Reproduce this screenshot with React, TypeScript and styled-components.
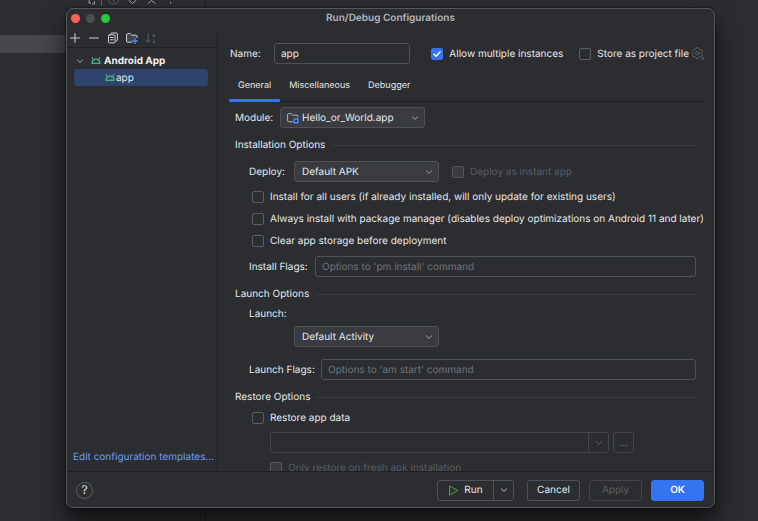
import React from "react";
import styled, { createGlobalStyle, css } from "styled-components";

const color = {
  panel: "#2b2d30",
  line: "#1f2023",
  rule: "#393b40",
  border: "#4e5157",
  text: "#e6e8eb",
  muted: "#6f737a",
  disabled: "#5a5d63",
  field: "#393b40",
  blue: "#3574f0",
  selection: "#2e436e",
  link: "#6b9bfa",
  icon: "#ced0d6",
};

const GlobalStyle = createGlobalStyle`
  * { box-sizing: border-box; }
  html, body { margin: 0; height: 100%; background: ${color.panel}; }
  body, button, input, select {
    font-family: Inter, "Liberation Sans", sans-serif;
    font-size: 10px;
    line-height: 14px;
    color: ${color.text};
    text-rendering: geometricPrecision;
  }
  button { padding: 0; border: 0; background: none; }
`;

/* ---------- editor behind the dialog ---------- */

const Desktop = styled.div`
  position: relative;
  display: flex;
  height: 100vh;
  min-height: 480px;
  overflow: hidden;
  padding: 8px 43px 13px 66px;
`;

const Backdrop = styled.div`
  position: absolute;
  inset: 0;
`;

const ToolPane = styled.div`
  width: 206px;
  height: 100%;
  padding-top: 35px;
  border-right: 1px solid ${color.line};
`;

const ActiveLine = styled.div`
  height: 18px;
  background: #45474b;
`;

const BackdropIcons = styled.svg`
  position: absolute;
  top: 0;
  left: 84px;
`;

/* ---------- dialog frame ---------- */

const Dialog = styled.section`
  position: relative;
  flex: 1;
  display: flex;
  flex-direction: column;
  min-width: 0;
  overflow: hidden;
  background: ${color.panel};
  border: 1px solid #55575b;
  border-radius: 7px;
`;

const DialogShadow = styled.div`
  flex: 1;
  display: flex;
  min-width: 0;
  position: relative;
  border-radius: 7px;
  box-shadow: 0 14px 26px rgba(0, 0, 0, 0.7), 0 0 2px #000;
`;

const TitleBar = styled.header`
  display: grid;
  grid-template-columns: 1fr auto 1fr;
  align-items: center;
  height: 20px;
  flex: none;
  padding: 0 4px 2px;
`;

const Title = styled.h1`
  margin: 0;
  font-size: 10px;
  line-height: 14px;
  font-weight: 600;
  color: #b4b7bd;
`;

const Lights = styled.div`
  display: flex;
  gap: 6px;
`;

const Light = styled.button<{ $fill: string }>`
  width: 9px;
  height: 9px;
  border-radius: 50%;
  background: ${(p) => p.$fill};
`;

const Body = styled.div`
  flex: 1;
  display: flex;
  min-height: 0;
`;

/* ---------- sidebar ---------- */

const Sidebar = styled.aside`
  display: flex;
  flex-direction: column;
  flex: none;
  width: 151px;
  border-right: 1px solid ${color.line};
`;

const Toolbar = styled.div`
  display: flex;
  align-items: center;
  gap: 7px;
  height: 19px;
  padding-left: 2px;
  border-bottom: 1px solid ${color.line};
`;

const ToolButton = styled.button`
  display: grid;
  place-items: center;
  width: 12px;
  height: 12px;
  color: ${color.icon};
  &:disabled { color: #5a5d63; }
  svg { display: block; }
`;

const Tree = styled.ul`
  flex: 1;
  margin: 0;
  padding: 4px 9px 0 7px;
  list-style: none;
`;

const TreeItem = styled.li<{ $selected?: boolean; $depth?: number }>`
  display: flex;
  align-items: center;
  height: 17px;
  border-radius: 3px;
  padding-left: ${(p) => (p.$depth ? 31 : 2)}px;
  gap: ${(p) => (p.$depth ? 1 : 3)}px;
  font-weight: ${(p) => (p.$depth ? 400 : 700)};
  color: ${(p) => (p.$depth ? color.text : "#f0f1f2")};
  background: ${(p) => (p.$selected ? color.selection : "transparent")};
`;

const Twisty = styled.span`
  display: flex;
  width: 12px;
  color: #9da0a8;
`;

const TemplatesLink = styled.a`
  padding: 0 6px 7px;
  color: ${color.link};
  text-decoration: none;
  white-space: nowrap;
`;

/* ---------- form ---------- */

const Main = styled.main`
  flex: 1;
  display: flex;
  flex-direction: column;
  min-width: 0;
  padding: 14px 10px 0 11px;
`;

const NameRow = styled.div`
  display: flex;
  align-items: center;
  flex: none;
  height: 21px;
  padding-left: 1px;
`;

const NameLabel = styled.label`
  width: 44px;
`;

const TextField = styled.input`
  flex: 1;
  min-width: 0;
  height: 21px;
  padding: 0 6px;
  background: transparent;
  border: 1px solid ${color.border};
  border-radius: 3px;
  outline: none;
  &::placeholder { color: ${color.muted}; opacity: 1; }
`;

const CheckLabel = styled.label<{ $spaceBefore?: number; $disabled?: boolean }>`
  display: flex;
  align-items: center;
  gap: 6px;
  margin-left: ${(p) => p.$spaceBefore ?? 0}px;
  white-space: nowrap;
  color: ${(p) => (p.$disabled ? color.disabled : color.text)};
`;

const CheckCell = styled.span`
  display: grid;
  place-items: center;
  width: 12px;
  height: 12px;
  > * { grid-area: 1 / 1; }
  svg { pointer-events: none; }
`;

const CheckInput = styled.input`
  appearance: none;
  width: 12px;
  height: 12px;
  margin: 0;
  border: 1px solid #5a5d63;
  border-radius: 2px;
  &:checked { background: ${color.blue}; border-color: ${color.blue}; }
  &:disabled { background: ${color.field}; border-color: #55585e; }
`;

const GearButton = styled.button`
  margin-left: 3px;
  width: 12px;
  height: 13px;
  color: #5f6268;
  svg { display: block; }
`;

const Tabs = styled.nav`
  display: flex;
  flex: none;
  height: 32px;
  margin-top: 6px;
  border-bottom: 1px solid ${color.line};
`;

const Tab = styled.button<{ $active?: boolean }>`
  position: relative;
  height: 32px;
  padding: 0 9px;
  font-size: 9px;
  ${(p) =>
    p.$active &&
    css`
      &::after {
        content: "";
        position: absolute;
        inset: auto 0 0;
        height: 3px;
        background: ${color.blue};
        border-radius: 1px;
      }
    `}
`;

const Form = styled.div`
  flex: 1;
  min-height: 0;
  overflow: hidden;
  padding: 5px 8px 0 6px;
`;

const SectionTitle = styled.h2`
  display: flex;
  align-items: center;
  gap: 6px;
  margin: 10px 0 0;
  font-size: 10px;
  line-height: 14px;
  font-weight: 400;
  &::after {
    content: "";
    flex: 1;
    height: 1px;
    background: ${color.rule};
  }
`;

const Row = styled.div<{ $top?: number; $indent?: number }>`
  display: flex;
  align-items: center;
  min-height: 21px;
  margin-top: ${(p) => p.$top ?? 0}px;
  padding-left: ${(p) => p.$indent ?? 0}px;
`;

const CheckRow = styled(Row)`
  min-height: 22px;
`;

const FieldLabel = styled.label<{ $width?: number }>`
  flex: none;
  width: ${(p) => (p.$width ? `${p.$width}px` : "auto")};
  white-space: nowrap;
`;

const LaunchLabel = styled(FieldLabel)`
  display: block;
  margin-top: 6px;
  padding-left: 14px;
`;

const SelectBox = styled.span`
  display: grid;
  align-items: center;
  width: 145px;
  > * { grid-area: 1 / 1; }
  svg { pointer-events: none; }
`;

const Select = styled.select<{ $withIcon?: boolean }>`
  appearance: none;
  width: 100%;
  height: 21px;
  padding: 0 20px 0 ${(p) => (p.$withIcon ? 21 : 7)}px;
  background: ${color.field};
  border: 1px solid ${color.border};
  border-radius: 3px;
  outline: none;
`;

const SelectArrow = styled.span`
  display: flex;
  justify-self: end;
  margin-right: 6px;
  color: #9da0a8;
  pointer-events: none;
`;

const SelectIcon = styled.span`
  display: flex;
  justify-self: start;
  margin-left: 7px;
  pointer-events: none;
`;

const Combo = styled.div`
  display: flex;
  width: 339px;
  height: 21px;
  border: 1px solid #43454a;
  border-radius: 3px;
`;

const ComboInput = styled.input`
  flex: 1;
  min-width: 0;
  padding: 0 6px;
  border: 0;
  background: transparent;
`;

const ComboToggle = styled.button`
  display: grid;
  place-items: center;
  width: 20px;
  border-left: 1px solid #43454a;
  color: ${color.disabled};
`;

const BrowseButton = styled.button`
  width: 21px;
  height: 21px;
  margin-left: 4px;
  border: 1px solid #43454a;
  border-radius: 3px;
  color: ${color.muted};
`;

/* ---------- footer ---------- */

const Footer = styled.footer`
  display: flex;
  align-items: center;
  flex: none;
  height: 36px;
  padding: 1px 10px 0 9px;
  border-top: 1px solid ${color.line};
`;

const HelpButton = styled.button`
  width: 17px;
  height: 17px;
  margin-right: auto;
  border: 1px solid #5a5d63;
  border-radius: 50%;
  font-size: 12px;
  line-height: 14px;
`;

const SplitButton = styled.div`
  display: flex;
  height: 21px;
  margin-right: 4px;
  border: 1px solid ${color.border};
  border-radius: 3px;
`;

const RunButton = styled.button`
  display: flex;
  align-items: center;
  justify-content: center;
  gap: 5px;
  width: 55px;
`;

const RunMenuButton = styled.button`
  display: grid;
  place-items: center;
  width: 20px;
  border-left: 1px solid ${color.border};
  color: #b4b7bd;
`;

const ActionButton = styled.button<{ $primary?: boolean }>`
  width: 53px;
  height: 21px;
  margin-left: 9px;
  border: 1px solid ${(p) => (p.$primary ? color.blue : color.border)};
  border-radius: 3px;
  background: ${(p) => (p.$primary ? color.blue : "transparent")};
  color: ${(p) => (p.$primary ? "#fff" : color.text)};
  font-weight: ${(p) => (p.$primary ? 600 : 400)};
  &:disabled { color: ${color.disabled}; border-color: #43454a; }
`;

/* ---------- icons ---------- */

const stroke = { fill: "none", stroke: "currentColor", strokeLinecap: "round", strokeLinejoin: "round" } as const;

const Chevron = () => (
  <svg width="8" height="8" viewBox="0 0 8 8" {...stroke} aria-hidden="true">
    <path d="M1.2 2.7 4 5.4l2.8-2.7" />
  </svg>
);

const AndroidIcon = () => (
  <svg width="10" height="9" viewBox="0 0 10 9" fill="none" stroke="#4fb286" strokeWidth="1.2" strokeLinecap="round" strokeLinejoin="round" aria-hidden="true">
    <path d="M.9 7.3C1 4.9 2.7 3.2 5 3.2s4 1.7 4.1 4.1ZM2.5 3.8 1.2 1.7M7.5 3.8l1.3-2.1" />
    <path d="M3.3 5.6v.1M6.7 5.6v.1" strokeWidth=".9" />
  </svg>
);

const PlusIcon = () => (
  <svg width="12" height="12" viewBox="0 0 12 12" {...stroke} aria-hidden="true">
    <path d="M1.5 6h9M6 1.5v9" />
  </svg>
);

const MinusIcon = () => (
  <svg width="12" height="12" viewBox="0 0 12 12" {...stroke} aria-hidden="true">
    <path d="M1.5 6h9" />
  </svg>
);

const CopyIcon = () => (
  <svg width="12" height="12" viewBox="0 0 12 12" {...stroke} aria-hidden="true">
    <path d="M3.6 2.3V2c0-.6.4-1 1-1h4.8c.6 0 1 .4 1 1v6.2c0 .6-.4 1-1 1h-.5" />
    <rect x="1.5" y="2.9" width="6.6" height="8" rx="1" />
    <path d="M3.4 5.5h2.8M3.4 7.8h2.8" />
  </svg>
);

const FolderPlusIcon = () => (
  <svg width="12" height="12" viewBox="0 0 12 12" {...stroke} aria-hidden="true">
    <path d="M5.8 10.2H1.6c-.6 0-1-.4-1-1V2.6c0-.6.4-1 1-1h2.6l1.6 1.6h4.3c.6 0 1 .4 1 1v1.3" fill="#43454a" />
    <path d="M9 6.6v4.8M6.6 9h4.8" stroke="#548af7" strokeWidth="1.3" />
  </svg>
);

const SortIcon = () => (
  <svg width="12" height="12" viewBox="0 0 12 12" {...stroke} aria-hidden="true">
    <path d="M3.2 1.6v8.6M1 8.1l2.2 2.2 2.2-2.2" />
    <g fill="currentColor" stroke="none" fontSize="6" fontWeight="600">
      <text x="7" y="5">a</text>
      <text x="7" y="11">z</text>
    </g>
  </svg>
);

const ModuleIcon = () => (
  <svg width="12" height="12" viewBox="0 0 12 12" {...stroke} aria-hidden="true">
    <path d="M5.6 9.8H1.6c-.6 0-1-.4-1-1V2.6c0-.6.4-1 1-1h2.6l1.6 1.6h4.1c.6 0 1 .4 1 1v1" stroke="#b4b7bd" />
    <rect x="7.2" y="7" width="3.8" height="3.8" rx=".3" fill="#25324d" stroke="#548af7" strokeWidth="1.4" strokeLinejoin="miter" />
  </svg>
);

const GearIcon = () => (
  <svg width="12" height="13" viewBox="0 0 12 13" {...stroke} strokeWidth=".9" aria-hidden="true">
    <path d="M4.1.8h2.3l.5 1.4 1 .6 1.5-.3 1.1 2-1 1.1v1.2l1 1.1-1.1 2-1.5-.3-1 .6-.5 1.3H4.1l-.5-1.3-1-.6-1.4.3-1.1-2 .9-1.1V5.6L.1 4.5l1.1-2 1.4.3 1-.6Z" />
    <circle cx="5.3" cy="6.2" r="1.7" />
    <path d="M11.7 9.8v2.7H9Z" fill="currentColor" stroke="none" />
  </svg>
);

const CheckMark = () => (
  <svg width="10" height="10" viewBox="0 0 10 10" fill="none" stroke="#fff" strokeWidth="1.5" strokeLinecap="round" strokeLinejoin="round" aria-hidden="true">
    <path d="m2 5.2 2.1 2L8 2.9" />
  </svg>
);

const PlayIcon = () => (
  <svg width="11" height="11" viewBox="0 0 11 11" fill="#253627" stroke="#57965c" strokeLinejoin="round" aria-hidden="true">
    <path d="M1.5 1v9l8.3-4.5Z" />
  </svg>
);

/* ---------- composed controls ---------- */

type CheckProps = {
  label: string;
  checked?: boolean;
  disabled?: boolean;
  spaceBefore?: number;
};

const Check = ({ label, checked, disabled, spaceBefore }: CheckProps) => {
  const [on, setOn] = React.useState(Boolean(checked));
  return (
    <CheckLabel $spaceBefore={spaceBefore} $disabled={disabled}>
      <CheckCell>
        <CheckInput type="checkbox" checked={on} disabled={disabled} onChange={(e) => setOn(e.target.checked)} />
        {on && <CheckMark />}
      </CheckCell>
      {label}
    </CheckLabel>
  );
};

const Dropdown = ({ id, value, icon }: { id: string; value: string; icon?: React.ReactNode }) => (
  <SelectBox>
    <Select id={id} defaultValue={value} $withIcon={Boolean(icon)}>
      <option>{value}</option>
    </Select>
    {icon && <SelectIcon>{icon}</SelectIcon>}
    <SelectArrow>
      <Chevron />
    </SelectArrow>
  </SelectBox>
);

export default function App() {
  return (
    <>
      <GlobalStyle />
      <Desktop>
        <Backdrop aria-hidden="true">
          <ToolPane>
            <ActiveLine />
          </ToolPane>
          <BackdropIcons width="92" height="6" viewBox="0 0 92 6" fill="none" stroke="#a5a7ac">
            <path d="M5 0v3h2M10.5 1v3H8M44.5 0l4 3.5 4-3.5M64 3.5 67.5.5l4 3" />
            <path d="M24.5 0a5 4 0 0 0 10 0M29.5 0v2M17.5 0v6" stroke="#5a5d63" />
            <path d="M86.5 2v1.5" />
          </BackdropIcons>
        </Backdrop>

        <DialogShadow>
          <Dialog role="dialog" aria-labelledby="dialog-title">
            <TitleBar>
              <Lights>
                <Light $fill="#ff5f57" aria-label="Close" />
                <Light $fill="#4d4e52" aria-label="Minimize" />
                <Light $fill="#28c840" aria-label="Zoom" />
              </Lights>
              <Title id="dialog-title">Run/Debug Configurations</Title>
            </TitleBar>

            <Body>
              <Sidebar>
                <Toolbar>
                  <ToolButton aria-label="Add"><PlusIcon /></ToolButton>
                  <ToolButton aria-label="Remove"><MinusIcon /></ToolButton>
                  <ToolButton aria-label="Copy"><CopyIcon /></ToolButton>
                  <ToolButton aria-label="New folder"><FolderPlusIcon /></ToolButton>
                  <ToolButton aria-label="Sort" disabled><SortIcon /></ToolButton>
                </Toolbar>
                <Tree>
                  <TreeItem>
                    <Twisty><Chevron /></Twisty>
                    <AndroidIcon />
                    Android App
                  </TreeItem>
                  <TreeItem $depth={1} $selected>
                    <AndroidIcon />
                    app
                  </TreeItem>
                </Tree>
                <TemplatesLink href="#templates">Edit configuration templates...</TemplatesLink>
              </Sidebar>

              <Main>
                <NameRow>
                  <NameLabel htmlFor="name">Name:</NameLabel>
                  <TextField id="name" defaultValue="app" />
                  <Check label="Allow multiple instances" checked spaceBefore={21} />
                  <Check label="Store as project file" spaceBefore={16} />
                  <GearButton aria-label="Storage settings"><GearIcon /></GearButton>
                </NameRow>

                <Tabs>
                  <Tab $active>General</Tab>
                  <Tab>Miscellaneous</Tab>
                  <Tab>Debugger</Tab>
                </Tabs>

                <Form>
                  <Row>
                    <FieldLabel htmlFor="module" $width={45}>Module:</FieldLabel>
                    <Dropdown id="module" value="Hello_or_World.app" icon={<ModuleIcon />} />
                  </Row>

                  <SectionTitle>Installation Options</SectionTitle>
                  <Row $top={9} $indent={14}>
                    <FieldLabel htmlFor="deploy" $width={45}>Deploy:</FieldLabel>
                    <Dropdown id="deploy" value="Default APK" />
                    <Check label="Deploy as instant app" disabled spaceBefore={13} />
                  </Row>
                  <CheckRow $top={4} $indent={17}>
                    <Check label="Install for all users (if already installed, will only update for existing users)" />
                  </CheckRow>
                  <CheckRow $indent={17}>
                    <Check label="Always install with package manager (disables deploy optimizations on Android 11 and later)" />
                  </CheckRow>
                  <CheckRow $indent={17}>
                    <Check label="Clear app storage before deployment" />
                  </CheckRow>
                  <Row $top={4} $indent={14}>
                    <FieldLabel htmlFor="install-flags" $width={66}>Install Flags:</FieldLabel>
                    <TextField id="install-flags" placeholder="Options to 'pm install' command" />
                  </Row>

                  <SectionTitle>Launch Options</SectionTitle>
                  <LaunchLabel htmlFor="launch">Launch:</LaunchLabel>
                  <Row $top={5} $indent={59}>
                    <Dropdown id="launch" value="Default Activity" />
                  </Row>
                  <Row $top={12} $indent={14}>
                    <FieldLabel htmlFor="launch-flags" $width={72}>Launch Flags:</FieldLabel>
                    <TextField id="launch-flags" placeholder="Options to 'am start' command" />
                  </Row>

                  <SectionTitle>Restore Options</SectionTitle>
                  <CheckRow $top={3} $indent={17}>
                    <Check label="Restore app data" />
                  </CheckRow>
                  <Row $top={3} $indent={35}>
                    <Combo>
                      <ComboInput aria-label="Backup file" disabled />
                      <ComboToggle aria-label="Show backups" disabled><Chevron /></ComboToggle>
                    </Combo>
                    <BrowseButton aria-label="Browse" disabled>...</BrowseButton>
                  </Row>
                  <CheckRow $top={4} $indent={35}>
                    <Check label="Only restore on fresh apk installation" disabled />
                  </CheckRow>
                </Form>
              </Main>
            </Body>

            <Footer>
              <HelpButton aria-label="Help">?</HelpButton>
              <SplitButton>
                <RunButton><PlayIcon />Run</RunButton>
                <RunMenuButton aria-label="More run options"><Chevron /></RunMenuButton>
              </SplitButton>
              <ActionButton>Cancel</ActionButton>
              <ActionButton disabled>Apply</ActionButton>
              <ActionButton $primary>OK</ActionButton>
            </Footer>
          </Dialog>
        </DialogShadow>
      </Desktop>
    </>
  );
}
